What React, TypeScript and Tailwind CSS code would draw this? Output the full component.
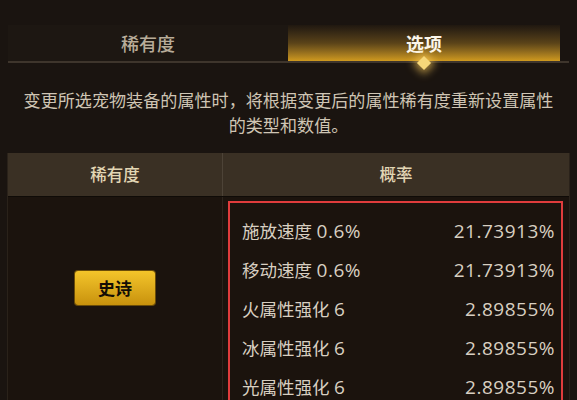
import React from 'react'

const rows = [
  { name: '施放速度', val: '0.6%', rate: '21.73913%' },
  { name: '移动速度', val: '0.6%', rate: '21.73913%' },
  { name: '火属性强化', val: '6', rate: '2.89855%' },
  { name: '冰属性强化', val: '6', rate: '2.89855%' },
  { name: '光属性强化', val: '6', rate: '2.89855%' },
]

export default function App() {
  return (
    <div
      className="w-[577px] h-[400px] overflow-hidden bg-[#1a1410] text-[#d6ccbc]"
      style={{ fontFamily: '"Noto Sans CJK SC", "Noto Sans", sans-serif' }}
    >
      {/* Tabs */}
      <div className="pt-[25px] px-[8px]">
        <div className="relative flex h-[38px] border-b-2 border-[#3e352c]">
          <div className="w-[280px] flex items-center justify-center bg-[#1d1712] text-[18px] font-medium text-[#b8ac9a]">
            稀有度
          </div>
          <div className="relative w-[272px] flex items-center justify-center bg-gradient-to-b from-[#201810] via-[#5a4318] to-[#d09a1e] text-[18px] font-bold text-[#fbf6ea]">
            选项
            <div className="absolute left-1/2 bottom-[-7px] -translate-x-1/2 w-[10px] h-[10px] rotate-45 bg-[#f7d87a] shadow-[0_0_8px_3px_rgba(247,200,90,0.7)]" />
          </div>
        </div>
      </div>

      {/* Description */}
      <div className="mt-[24px] px-[14px] text-center text-[17.1px] leading-[25px] text-[#cfc5b4]">
        变更所选宠物装备的属性时，将根据变更后的属性稀有度重新设置属性
        <br />
        的类型和数值。
      </div>

      {/* Table */}
      <div className="mt-[16px] mx-[7px] border-x border-[#2a221a]">
        <div className="flex h-[43px] bg-[#3a3024] text-[16.5px] font-medium text-[#e2d6b4]">
          <div className="w-[215px] flex items-center justify-center border-r border-[#4d4337]">稀有度</div>
          <div className="flex-1 flex items-center justify-center">概率</div>
        </div>
        <div className="flex h-[210px] bg-[#1b130d] border-t border-[#0f0b07]">
          <div className="w-[215px] flex justify-center border-r border-[#2c241c] pt-[74px]">
            <div className="w-[80px] h-[34px] flex items-center justify-center rounded-[3px] bg-gradient-to-b from-[#f4c52a] to-[#c8920c] text-[17px] font-bold text-[#140d05] shadow-[0_0_0_1px_#6a4c08]">
              史诗
            </div>
          </div>
          <div className="flex-1 pl-[5px] pr-[6px] pt-[4px]">
            <div className="border-2 border-b-0 border-[#e03c3c] pt-[9px] pl-[12px] pr-[6px] h-[220px]">
              {rows.map((r) => (
                <div
                  key={r.name}
                  className="flex h-[39px] items-center justify-between text-[17.5px] text-[#d8cfc1]"
                  style={{ fontFamily: '"Open Sans", "Noto Sans CJK SC", sans-serif' }}
                >
                  <span>
                    {r.name} <span className="text-[19px] tracking-[0.5px]">{r.val}</span>
                  </span>
                  <span className="text-[19px] tracking-[0.5px]">{r.rate}</span>
                </div>
              ))}
            </div>
          </div>
        </div>
      </div>
    </div>
  )
}
